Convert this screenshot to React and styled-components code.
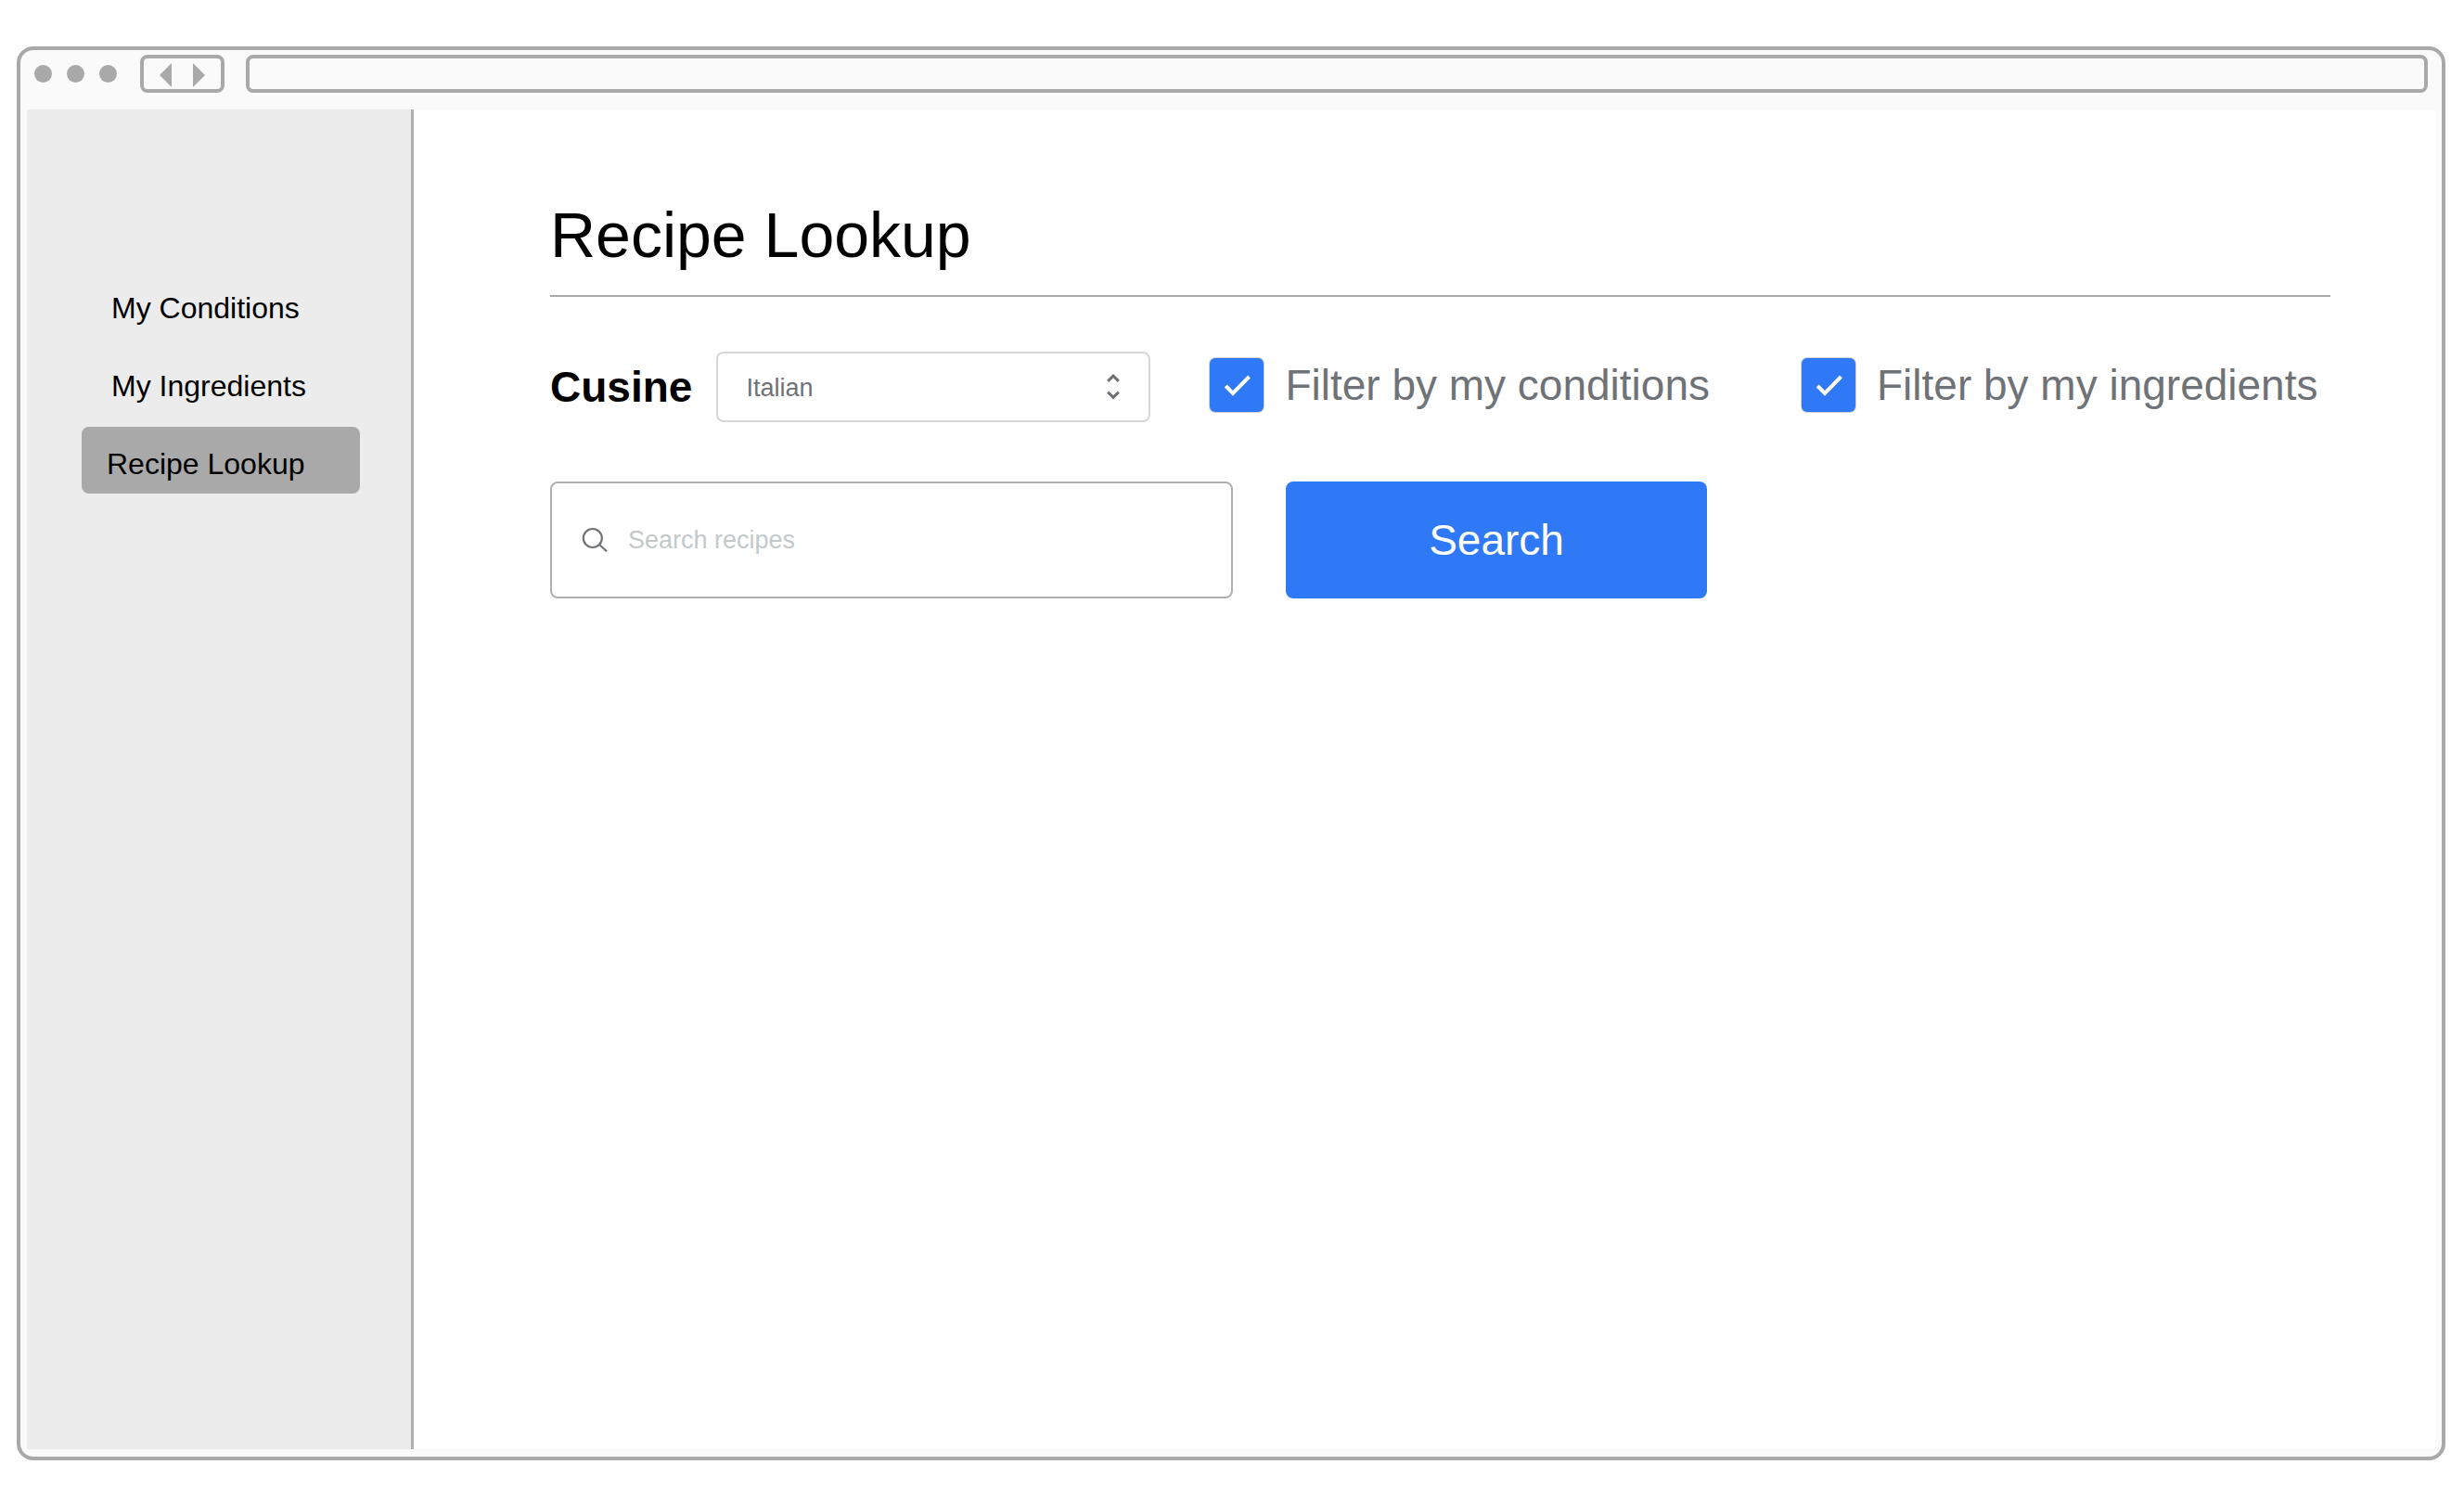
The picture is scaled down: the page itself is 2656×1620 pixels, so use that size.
import React, { useState } from "react";
import styled, { createGlobalStyle } from "styled-components";

const line = "#a9a9a9";
const chrome = "#fafafa";
const blue = "#3079f6";
const slate = "#6f7277";

const GlobalStyle = createGlobalStyle`
  *, *::before, *::after { box-sizing: border-box; }
  body { margin: 0; background: #fff; color: #000; }
  body, button, input, select { font-family: "Liberation Sans", Arial, sans-serif; }
`;

const Page = styled.div`
  display: flex;
  min-height: 100vh;
  padding: 50px 20px 46px 18px;
`;

const BrowserWindow = styled.div`
  flex: 1;
  min-width: 0;
  display: flex;
  flex-direction: column;
  padding: 0 7px 8px;
  border: 4px solid ${line};
  border-radius: 18px;
  background: ${chrome};
`;

const Toolbar = styled.header`
  display: flex;
  align-items: center;
  padding: 5px 8px 18px;
`;

const Dots = styled.div`
  display: flex;
  gap: 16px;
  margin-right: 25px;
`;

const Dot = styled.span`
  width: 19px;
  height: 19px;
  border-radius: 50%;
  background: ${line};
`;

const History = styled.div`
  display: flex;
  align-items: center;
  justify-content: center;
  gap: 23px;
  width: 91px;
  height: 41px;
  margin-right: 23px;
  border: 4px solid ${line};
  border-radius: 8px;
`;

const HistoryButton = styled.button`
  display: flex;
  padding: 2px 0 0;
  border: 0;
  background: none;
  color: ${line};
`;

const Address = styled.input`
  flex: 1;
  min-width: 0;
  height: 41px;
  padding: 0 12px;
  border: 4px solid ${line};
  border-radius: 8px;
  background: transparent;
  font-size: 20px;
  outline: none;
`;

const Content = styled.div`
  flex: 1;
  display: flex;
  background: #fff;
`;

const Sidebar = styled.nav`
  flex: none;
  display: flex;
  flex-direction: column;
  gap: 12px;
  width: 417px;
  padding: 174px 55px 0 59px;
  border-right: 3px solid #b0b0b0;
  background: #ececec;
`;

const NavLink = styled.a`
  display: flex;
  align-items: center;
  height: 72px;
  padding: 8px 0 0 ${(p) => (p.$active ? 27 : 32)}px;
  border-radius: 8px;
  background: ${(p) => (p.$active ? line : "transparent")};
  color: #000;
  font-size: 32px;
  text-decoration: none;
  white-space: nowrap;
`;

const Main = styled.main`
  flex: 1;
  min-width: 0;
  padding: 95px 113px 95px 147px;
`;

const Title = styled.h1`
  margin: 0;
  padding-bottom: 25px;
  border-bottom: 2px solid ${line};
  font-size: 68px;
  font-weight: 400;
  line-height: 80px;
`;

const Filters = styled.div`
  display: flex;
  align-items: center;
  margin-top: 59px;
`;

const FieldLabel = styled.label`
  margin-right: 26px;
  font-size: 46px;
  font-weight: 700;
  line-height: 54px;
`;

const SelectBox = styled.div`
  position: relative;
  flex: 0 1 468px;
  min-width: 200px;
  margin-right: 64px;

  svg {
    position: absolute;
    top: 22px;
    right: 33px;
    pointer-events: none;
  }
`;

const Select = styled.select`
  appearance: none;
  display: block;
  width: 100%;
  height: 76px;
  padding: 2px 64px 0 30px;
  border: 2px solid #d5d7d9;
  border-radius: 8px;
  background: #fff;
  color: ${slate};
  font-size: 27px;
`;

const Checks = styled.div`
  display: flex;
  gap: 99px;
  padding-bottom: 4px;
`;

const CheckLabel = styled.label`
  display: flex;
  align-items: center;
  gap: 23px;
  color: ${slate};
  font-size: 46px;
  line-height: 54px;
  white-space: nowrap;
`;

const CheckBox = styled.span`
  display: grid;
  width: 58px;
  height: 58px;

  > * { grid-area: 1 / 1; }
  svg { pointer-events: none; }
  input:not(:checked) + svg { visibility: hidden; }
`;

const CheckInput = styled.input`
  appearance: none;
  margin: 0;
  border-radius: 6px;
  background: #fff;
  box-shadow: 0 0 0 1px #cfd0d2;

  &:checked { background: ${blue}; }
`;

const SearchForm = styled.form`
  display: flex;
  gap: 57px;
  margin-top: 64px;
`;

const SearchField = styled.label`
  display: flex;
  align-items: center;
  gap: 22px;
  flex: 0 1 736px;
  height: 126px;
  padding: 0 32px;
  border: 2px solid #b0b0b0;
  border-radius: 8px;
`;

const SearchInput = styled.input`
  flex: 1;
  min-width: 0;
  padding: 0;
  border: 0;
  outline: none;
  background: none;
  color: ${slate};
  font-size: 27px;

  &::placeholder { color: #c3c9c9; opacity: 1; }
`;

const SearchButton = styled.button`
  flex: 0 1 454px;
  height: 126px;
  border: 0;
  border-radius: 8px;
  background: ${blue};
  color: #fff;
  font-size: 46px;
`;

const pages = ["My Conditions", "My Ingredients", "Recipe Lookup"];

function Arrow({ label, points }) {
  return (
    <HistoryButton type="button" aria-label={label}>
      <svg width="13" height="26" viewBox="0 0 13 26" fill="currentColor">
        <polygon points={points} />
      </svg>
    </HistoryButton>
  );
}

function Check({ children }) {
  const [checked, setChecked] = useState(true);
  return (
    <CheckLabel>
      <CheckBox>
        <CheckInput
          type="checkbox"
          checked={checked}
          onChange={(e) => setChecked(e.target.checked)}
        />
        <svg width="58" height="58" viewBox="0 0 58 58" fill="none" stroke="#fff" strokeWidth="4">
          <path d="M17.2 30 L25 38 L42.5 20" />
        </svg>
      </CheckBox>
      {children}
    </CheckLabel>
  );
}

export default function App() {
  return (
    <Page>
      <GlobalStyle />
      <BrowserWindow>
        <Toolbar>
          <Dots>
            <Dot />
            <Dot />
            <Dot />
          </Dots>
          <History>
            <Arrow label="Back" points="0,13 13,0 13,26" />
            <Arrow label="Forward" points="13,13 0,0 0,26" />
          </History>
          <Address type="text" aria-label="Address" />
        </Toolbar>
        <Content>
          <Sidebar>
            {pages.map((name) => (
              <NavLink
                key={name}
                href="#"
                $active={name === "Recipe Lookup"}
                aria-current={name === "Recipe Lookup" ? "page" : undefined}
              >
                {name}
              </NavLink>
            ))}
          </Sidebar>
          <Main>
            <Title>Recipe Lookup</Title>
            <Filters>
              <FieldLabel htmlFor="cuisine">Cusine</FieldLabel>
              <SelectBox>
                <Select id="cuisine" defaultValue="Italian">
                  <option>Italian</option>
                </Select>
                <svg width="14" height="32" viewBox="0 0 14 32" fill="none" stroke={slate} strokeWidth="3">
                  <path d="M1.2 9.8 L7 4.2 L12.8 9.8" />
                  <path d="M1.2 21.7 L7 27.3 L12.8 21.7" />
                </svg>
              </SelectBox>
              <Checks>
                <Check>Filter by my conditions</Check>
                <Check>Filter by my ingredients</Check>
              </Checks>
            </Filters>
            <SearchForm onSubmit={(e) => e.preventDefault()}>
              <SearchField>
                <svg width="28" height="28" viewBox="0 0 28 28" fill="none" stroke={slate} strokeWidth="2.2">
                  <circle cx="11.8" cy="12" r="10" />
                  <path d="M19 19 L27 26.3" />
                </svg>
                <SearchInput type="search" aria-label="Search recipes" placeholder="Search recipes" />
              </SearchField>
              <SearchButton type="submit">Search</SearchButton>
            </SearchForm>
          </Main>
        </Content>
      </BrowserWindow>
    </Page>
  );
}
